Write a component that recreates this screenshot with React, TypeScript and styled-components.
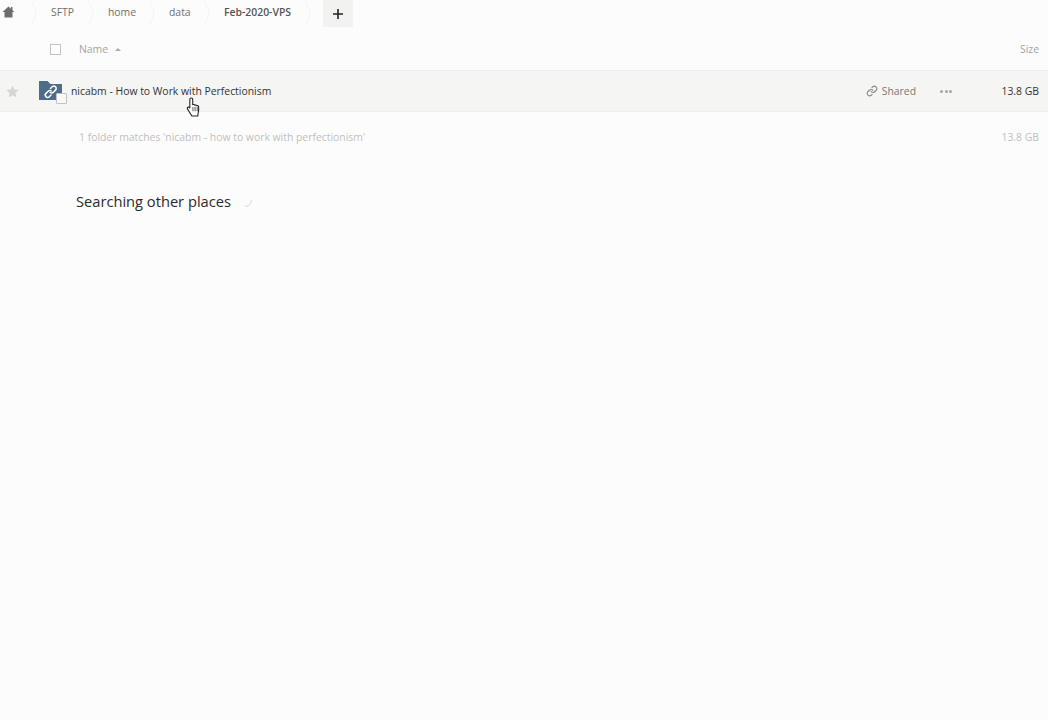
import React from 'react';
import styled, { createGlobalStyle } from 'styled-components';

const GlobalStyle = createGlobalStyle`
  html, body {
    margin: 0;
    padding: 0;
    height: 100%;
    background: #fdfcfc;
    font-family: "Open Sans", "Liberation Sans", sans-serif;
    overflow: hidden;
  }
`;

const Page = styled.div`
  width: 1048px;
  height: 720px;
  display: flex;
  flex-direction: column;
  background: #fdfcfc;
`;

const Breadcrumb = styled.div`
  display: flex;
  align-items: flex-start;
  height: 27px;
`;

const HomeCrumb = styled.div`
  width: 31px;
  height: 23px;
  box-sizing: border-box;
  display: flex;
  align-items: center;
  padding-left: 2px;
`;

const Crumb = styled.div<{ $current?: boolean; $width: number }>`
  width: ${(p) => p.$width}px;
  height: 24px;
  line-height: 24px;
  padding-left: 14px;
  box-sizing: border-box;
  font-size: 10.4px;
  font-weight: ${(p) => (p.$current ? 600 : 400)};
  color: ${(p) => (p.$current ? '#555' : '#6f6f6f')};
  white-space: nowrap;
`;

const Chevron = styled.svg`
  width: 6px;
  height: 26px;
  flex: none;
`;

const AddButton = styled.div`
  width: 30px;
  height: 27px;
  margin-left: 12px;
  background: #f2f2f1;
  display: flex;
  align-items: center;
  justify-content: center;
  font-size: 0;
`;

const HeaderRow = styled.div`
  display: flex;
  align-items: center;
  height: 44px;
  padding-top: 1px;
  box-sizing: border-box;
  border-bottom: 1px solid #eeeeed;
  font-size: 10.4px;
  color: #a3a3a3;
`;

const HeaderCheck = styled.span`
  width: 9px;
  height: 9px;
  margin-left: 50px;
  border: 1px solid #c4c4c4;
  background: #fff;
`;

const NameHead = styled.span`
  margin-left: 18px;
  display: flex;
  align-items: center;
  gap: 7px;
`;

const SortArrow = styled.span`
  width: 0;
  height: 0;
  margin-top: 1px;
  border-left: 3px solid transparent;
  border-right: 3px solid transparent;
  border-bottom: 3px solid #aaa;
`;

const SizeHead = styled.span`
  margin-left: auto;
  padding-right: 9px;
`;

const FileRow = styled.div`
  position: relative;
  display: flex;
  align-items: center;
  height: 41px;
  box-sizing: border-box;
  background: #f5f5f4;
  border-bottom: 1px solid #eeeeed;
`;

const Star = styled.svg`
  width: 13px;
  height: 13px;
  margin-left: 6px;
  flex: none;
`;

const FolderWrap = styled.div`
  position: relative;
  width: 23px;
  height: 22px;
  margin-left: 20px;
  flex: none;
`;

const RowCheck = styled.span`
  position: absolute;
  right: -5px;
  bottom: -2px;
  width: 9px;
  height: 9px;
  border: 1px solid #c2c2c2;
  background: #f8f8f8;
  border-radius: 1px;
`;

const FileName = styled.span`
  margin-left: 9px;
  font-size: 10.4px;
  color: #333;
  white-space: nowrap;
`;

const SharedAction = styled.span`
  margin-left: auto;
  display: flex;
  align-items: center;
  gap: 4px;
  font-size: 10.4px;
  color: #777;
`;

const Dots = styled.span`
  display: flex;
  gap: 1.5px;
  margin-left: 24px;
  margin-top: 1px;
`;

const Dot = styled.i`
  width: 3px;
  height: 3px;
  border-radius: 50%;
  background: #a5a5a5;
`;

const FileSize = styled.span`
  width: 96px;
  padding-right: 9px;
  box-sizing: border-box;
  text-align: right;
  font-size: 10.4px;
  color: #333;
`;

const Summary = styled.div`
  display: flex;
  justify-content: space-between;
  height: 71px;
  padding: 18px 9px 0 79px;
  box-sizing: border-box;
  font-size: 10.4px;
  line-height: 14px;
  color: #c0c0c0;
`;

const SectionTitle = styled.h2`
  display: flex;
  align-items: center;
  margin: 0;
  padding: 8px 0 0 76px;
  font-size: 14.66px;
  line-height: 20px;
  font-weight: 400;
  color: #2b2b2b;
`;

const Spinner = styled.svg`
  width: 8px;
  height: 8px;
  margin: 3px 0 0 13px;
`;

const Cursor = styled.svg`
  position: absolute;
  left: 186px;
  top: 25px;
  width: 16px;
  height: 22px;
`;

const crumbs = [
  { label: 'SFTP', width: 51 },
  { label: 'home', width: 55 },
  { label: 'data', width: 49 },
];

const Arrow = () => (
  <Chevron viewBox="0 0 6 26">
    <path d="M0.500 1l5 12-5 12" fill="none" stroke="#f3f3f2" strokeWidth="1" />
  </Chevron>
);

export default function App() {
  return (
    <Page>
      <GlobalStyle />
      <Breadcrumb>
        <HomeCrumb>
          <svg width="13" height="12" viewBox="0 0 13 12">
            <path d="M6.500 0.500L0.500 6h2v5.500h8V6h2L10.500 4.200V1h-1.600v1.700z" fill="#6e6e6e" />
          </svg>
        </HomeCrumb>
        <Arrow />
        {crumbs.map((c) => (
          <React.Fragment key={c.label}>
            <Crumb $width={c.width}>{c.label}</Crumb>
            <Arrow />
          </React.Fragment>
        ))}
        <Crumb $current $width={95}>Feb-2020-VPS</Crumb>
        <Arrow />
        <AddButton>
          <svg width="10" height="10" viewBox="0 0 10 10">
            <path d="M5 0v10M0 5h10" stroke="#222" strokeWidth="1.600" />
          </svg>
        </AddButton>
      </Breadcrumb>
      <HeaderRow>
        <HeaderCheck />
        <NameHead>
          Name
          <SortArrow />
        </NameHead>
        <SizeHead>Size</SizeHead>
      </HeaderRow>
      <FileRow>
        <Star viewBox="0 0 24 24">
          <path d="M12 1l3.400 7.400 8 .9-6 5.400 1.700 8L12 18.700l-7.100 4 1.700-8-6-5.400 8-.9z" fill="#d6d6d6" />
        </Star>
        <FolderWrap>
          <svg width="23" height="22" viewBox="0 0 23 22">
            <path d="M0 1h8.500l3 3H23v16H0z" fill="#4f6c8a" />
            <g fill="none" stroke="#fff" strokeWidth="1.500" strokeLinecap="round">
              <path d="M11.500 8.500l1.700-1.700a2.300 2.300 0 0 1 3.300 3.300l-2.200 2.200a2.300 2.300 0 0 1-3 .2" />
              <path d="M12 15l-1.700 1.700a2.300 2.300 0 0 1-3.300-3.300l2.200-2.200a2.300 2.300 0 0 1 3-.2" />
            </g>
          </svg>
          <RowCheck />
        </FolderWrap>
        <FileName>nicabm - How to Work with Perfectionism</FileName>
        <SharedAction>
          <svg width="12" height="12" viewBox="0 0 24 24" fill="none" stroke="#8a8a8a" strokeWidth="2.200" strokeLinecap="round" strokeLinejoin="round">
            <path d="M10 13a5 5 0 0 0 7.500.5l3-3a5 5 0 0 0-7-7l-1.700 1.700" />
            <path d="M14 11a5 5 0 0 0-7.500-.5l-3 3a5 5 0 0 0 7 7l1.700-1.700" />
          </svg>
          Shared
        </SharedAction>
        <Dots>
          <Dot />
          <Dot />
          <Dot />
        </Dots>
        <FileSize>13.8 GB</FileSize>
        <Cursor viewBox="0 0 15 20">
          <path
            d="M5 1.500c.8 0 1.300.6 1.300 1.400v5l.6-.2c.7-.2 1.300.1 1.500.6.700-.3 1.400-.1 1.700.5.700-.3 1.500 0 1.700.7.200 1.500.2 3.500-.3 5.500L11 18.500H5.500L1.500 12c-.5-.8-.3-1.500.3-1.800.6-.3 1.200 0 1.800.7V2.900c0-.8.600-1.400 1.400-1.400z"
            fill="#fff"
            stroke="#222"
            strokeWidth="1"
            strokeLinejoin="round"
          />
          <path d="M6.500 10v4M8.500 10v4M10.500 10v4" stroke="#222" strokeWidth=".7" />
        </Cursor>
      </FileRow>
      <Summary>
        <span>1 folder matches 'nicabm - how to work with perfectionism'</span>
        <span>13.8 GB</span>
      </Summary>
      <SectionTitle>
        Searching other places
        <Spinner viewBox="0 0 8 8">
          <path d="M7 1a5 5 0 0 1-6 6" fill="none" stroke="#d5d5d5" strokeWidth="1" />
        </Spinner>
      </SectionTitle>
    </Page>
  );
}
